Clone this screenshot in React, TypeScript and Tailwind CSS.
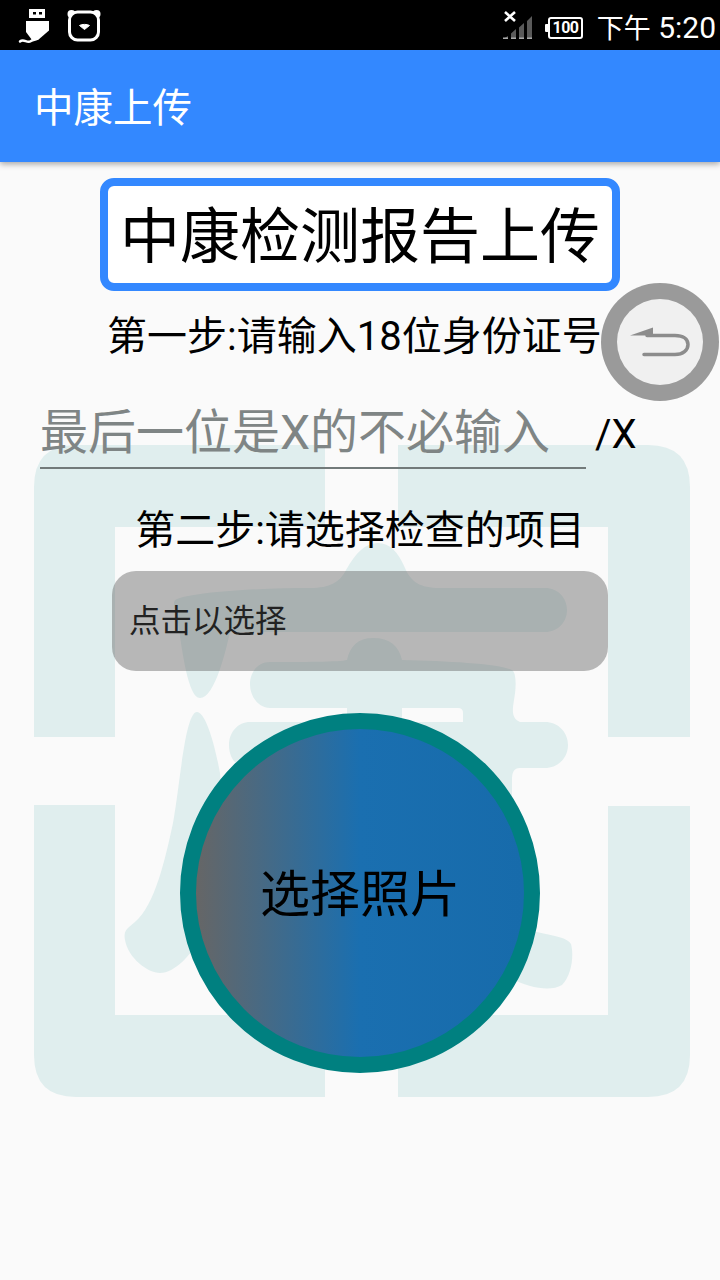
function Watermark() {
  return (
    <svg className="absolute inset-0" width="720" height="1280" viewBox="0 0 720 1280" fill="#e0eeee">
      <path d="M34 737V487Q34 445 76 445H325V527H115V737Z" />
      <path d="M398 445H648Q690 445 690 487V737H608V527H398Z" />
      <path d="M34 805H115V1015H325V1097H76Q34 1097 34 1055Z" />
      <path d="M690 806H608V1015H398V1097H648Q690 1097 690 1055Z" />
      <path d="M175 600C190 592 260 588 310 588C330 588 340 582 346 570C356 552 366 543 378 543C390 543 398 552 405 568C411 582 420 588 440 588H545C558 588 567 598 567 610C567 622 558 632 545 632H230C226 650 215 698 200 698C188 698 182 650 178 622C176 610 172 604 175 600Z" />
      <path d="M347 660C350 646 358 638 373 638C390 638 399 646 402 660C450 661 500 664 512 670C517 673 516 690 514 700C512 712 512 718 520 722H545C558 722 568 732 568 745C568 758 558 768 545 768H520C514 768 512 772 512 780V800H300V768H250C236 768 229 758 229 745C229 732 238 722 250 722H347V708H270C258 708 250 696 250 684C250 672 258 662 270 662C300 662 340 662 347 660Z" />
      <path d="M402 708H458Q463 708 463 713V722H402Z" fill="#fafafa" />
      <path d="M197 712C204 712 213 735 220 773L230 900L200 940C190 955 175 973 160 973C148 973 128 958 125 940C123 930 128 928 135 922C155 905 165 860 173 823C180 785 185 712 197 712Z" />
      <path d="M500 925L537 932C555 936 568 938 571 944C574 955 572 975 562 985C550 992 530 988 510 978Z" />
    </svg>
  );
}

function UsbIcon() {
  return (
    <svg width="36" height="44" viewBox="0 0 36 44" className="absolute left-[17px] top-[6px]" fill="#fff">
      <path fillRule="evenodd" d="M12 3H28V12H12ZM16 6V8.500H19V6ZM22 6V8.500H25V6Z" />
      <path d="M9 15H32V24.500L21 34H15L9 26Z" />
      <path d="M3 35.500C7 32 10 38 14 35C16 33.500 18 34 20 33" fill="none" stroke="#fff" strokeWidth="2.500" strokeLinecap="round" />
    </svg>
  );
}

function BearIcon() {
  return (
    <svg width="40" height="40" viewBox="0 0 40 40" className="absolute left-[64px] top-[6px]">
      <circle cx="7.500" cy="8" r="4" fill="#fff" />
      <circle cx="32.500" cy="8" r="4" fill="#fff" />
      <rect x="5.500" y="6" width="29" height="28" rx="8" fill="#000" stroke="#fff" strokeWidth="3" />
      <path d="M15.500 19.500C17 18 24 18 25.500 19.500L20.500 23.500Z" fill="#fff" stroke="#fff" strokeLinejoin="round" />
    </svg>
  );
}

function SignalIcon() {
  return (
    <svg width="34" height="34" viewBox="0 0 34 34" className="absolute left-[501px] top-[8px]">
      <path d="M2 31H7V28L2 31ZM10 31H15V21L10 25.500ZM18 31H23V15L18 19.500ZM26 31H31V8L26 13Z" fill="#5a5a5a" />
      <path d="M2 31H7V29.500H2ZM10 31H15V29.500H10ZM18 31H23V29.500H18ZM26 31H31V29.500H26Z" fill="#aaa" />
      <path d="M4 4L14 13M14 4L4 13" stroke="#fff" strokeWidth="2.600" />
    </svg>
  );
}

function BackIcon() {
  return (
    <svg width="86" height="86" viewBox="0 0 86 86">
      <path d="M13 36.500L36 28.500V36.500Z" fill="#8c8c8c" />
      <path d="M30 36.500H58C66 36.500 71 40 71 45.500C71 51 66 55.500 58 55.500H27" fill="none" stroke="#8c8c8c" strokeWidth="3.500" strokeLinecap="round" />
    </svg>
  );
}

export default function App() {
  return (
    <div className="relative w-[720px] h-[1280px] overflow-hidden bg-[#fafafa] text-black font-['Roboto','Noto_Sans_CJK_SC',sans-serif]">
      <Watermark />
      <div className="relative flex flex-col h-full">
        <div className="relative h-[50px] shrink-0 bg-black text-white">
          <UsbIcon />
          <BearIcon />
          <SignalIcon />
          <div className="absolute left-[545px] top-[17px] flex items-center">
            <div className="w-[3px] h-[8px] bg-white rounded-l-[1px]" />
            <div className="w-[35px] h-[22px] border-2 border-white rounded-[3px] flex items-center justify-center text-[16px] leading-none font-bold tracking-[-0.5px]">100</div>
          </div>
          <div className="absolute right-[4px] top-[2px] h-[50px] flex items-baseline pt-[11px] leading-none whitespace-pre">
            <span className="text-[27px]">下午</span>
            <span className="text-[30px]"> 5:20</span>
          </div>
        </div>
        <div className="h-[112px] shrink-0 bg-[#3388ff] flex items-center pl-[34px] pt-[5px] text-white text-[39.500px] leading-none shadow-[0_2px_6px_rgba(0,0,0,0.35)]">中康上传</div>
        <div className="flex flex-col items-center">
          <div className="mt-[16px] w-[520px] h-[113px] box-border border-[8px] border-[#3388ff] rounded-[14px] bg-white flex items-center justify-center pt-[6px] text-[60px] leading-none">中康检测报告上传</div>
          <div className="mt-[22px] self-start ml-[107px] h-[48px] flex items-center text-[40px] leading-none whitespace-nowrap">第一步:请输入18位身份证号</div>
          <div className="mt-[40px] self-start ml-[40px] h-[68px] flex items-start">
            <input
              readOnly
              placeholder="最后一位是X的不必输入"
              className="w-[546px] h-[68px] pb-[4px] bg-transparent border-b-2 border-[#727a7a] text-[48px] leading-none outline-none placeholder:text-[#7f8585] placeholder:opacity-100"
            />
            <div className="ml-[9px] h-[68px] flex items-center text-[40px] leading-none">/X</div>
          </div>
          <div className="mt-[36px] h-[48px] flex items-center pt-[4px] text-[40px] leading-none whitespace-nowrap">第二步:请选择检查的项目</div>
          <div className="mt-[18px] w-[496px] h-[100px] rounded-[24px] bg-[#666666]/45 flex items-center pl-[17px] pt-[2px] text-[31.500px] text-[#222] leading-none">点击以选择</div>
          <div className="mt-[42px] w-[360px] h-[360px] box-border rounded-full border-[16px] border-[#008080] bg-[linear-gradient(to_right,#666666,#1a6fb0_50%,#176bab)] flex items-center justify-center pt-[4px] text-[50px] leading-none">选择照片</div>
        </div>
      </div>
      <div className="absolute left-[601px] top-[283px] w-[118px] h-[118px] rounded-full bg-[#9a9a9a] flex items-center justify-center">
        <div className="w-[86px] h-[86px] rounded-full bg-[#f0f0f0]">
          <BackIcon />
        </div>
      </div>
    </div>
  );
}
